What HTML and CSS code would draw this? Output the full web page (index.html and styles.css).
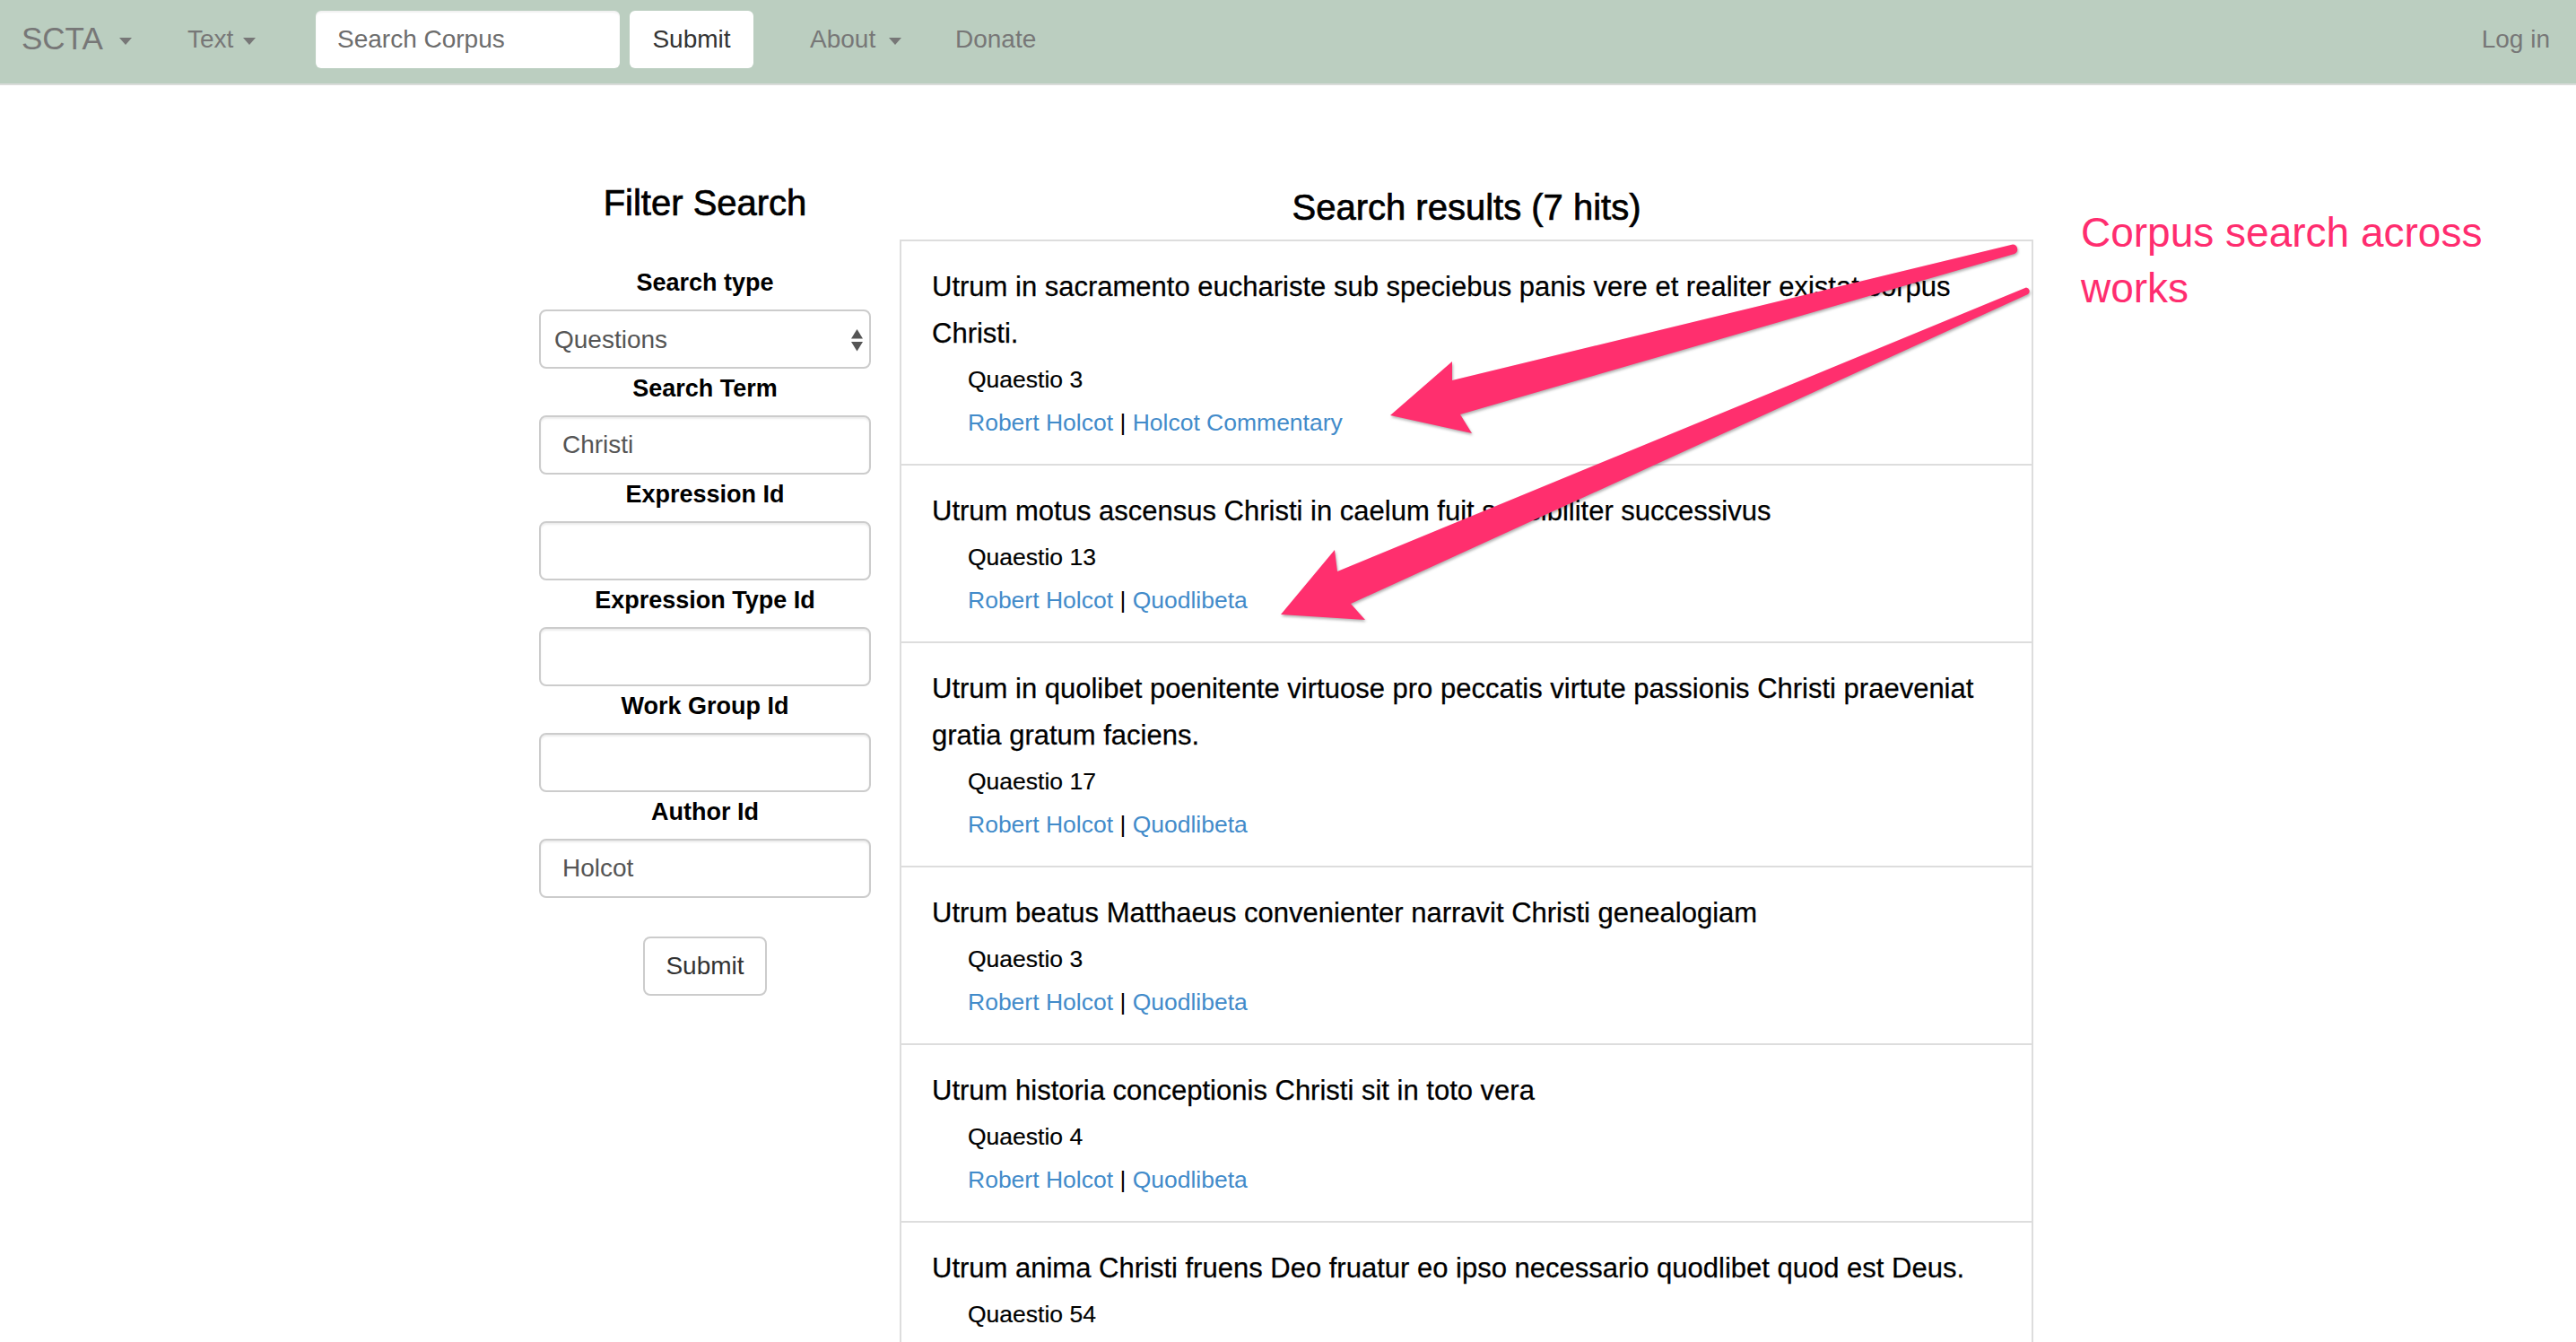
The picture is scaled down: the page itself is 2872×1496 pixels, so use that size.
FILE: index.html
```html
<!DOCTYPE html>
<html lang="en">
<head>
<meta charset="utf-8">
<title>SCTA - Corpus Search</title>
<link rel="stylesheet" href="styles.css">
</head>
<body>
<nav class="navbar">
  <div class="nav-item brand">SCTA<span class="caret caret-brand"></span></div>
  <div class="nav-item text-menu">Text<span class="caret caret-text"></span></div>
  <form class="nav-search">
    <input class="nav-input" type="text" placeholder="Search Corpus">
    <button class="nav-btn" type="button">Submit</button>
  </form>
  <div class="nav-item about">About<span class="caret caret-about"></span></div>
  <div class="nav-item donate">Donate</div>
  <div class="nav-item login">Log in</div>
</nav>

<main class="main">
  <aside class="filter">
    <h3 class="filter-title">Filter Search</h3>
    <form class="filter-form">
      <label class="flabel">Search type</label>
      <div class="select-wrap">
        <select class="fselect"><option>Questions</option></select>
        <svg class="select-arrows" width="13" height="25" viewBox="0 0 13 25"><polygon points="6.5,0 13,10.5 0,10.5"/><polygon points="0,14 13,14 6.5,24.5"/></svg>
      </div>
      <label class="flabel">Search Term</label>
      <input class="finput" type="text" value="Christi">
      <label class="flabel">Expression Id</label>
      <input class="finput" type="text" value="">
      <label class="flabel">Expression Type Id</label>
      <input class="finput" type="text" value="">
      <label class="flabel">Work Group Id</label>
      <input class="finput" type="text" value="">
      <label class="flabel">Author Id</label>
      <input class="finput" type="text" value="Holcot">
      <button class="fbtn" type="button">Submit</button>
    </form>
  </aside>

  <section class="results">
    <h3 class="results-title">Search results (7 hits)</h3>
    <ul class="result-list">
      <li class="result">
        <p class="r-title">Utrum in sacramento euchariste sub speciebus panis vere et realiter existat corpus Christi.</p>
        <div class="r-q">Quaestio 3</div>
        <div class="r-links"><a href="#">Robert Holcot</a> | <a href="#">Holcot Commentary</a></div>
      </li>
      <li class="result">
        <p class="r-title">Utrum motus ascensus Christi in caelum fuit sensibiliter successivus</p>
        <div class="r-q">Quaestio 13</div>
        <div class="r-links"><a href="#">Robert Holcot</a> | <a href="#">Quodlibeta</a></div>
      </li>
      <li class="result">
        <p class="r-title">Utrum in quolibet poenitente virtuose pro peccatis virtute passionis Christi praeveniat gratia gratum faciens.</p>
        <div class="r-q">Quaestio 17</div>
        <div class="r-links"><a href="#">Robert Holcot</a> | <a href="#">Quodlibeta</a></div>
      </li>
      <li class="result">
        <p class="r-title">Utrum beatus Matthaeus convenienter narravit Christi genealogiam</p>
        <div class="r-q">Quaestio 3</div>
        <div class="r-links"><a href="#">Robert Holcot</a> | <a href="#">Quodlibeta</a></div>
      </li>
      <li class="result">
        <p class="r-title">Utrum historia conceptionis Christi sit in toto vera</p>
        <div class="r-q">Quaestio 4</div>
        <div class="r-links"><a href="#">Robert Holcot</a> | <a href="#">Quodlibeta</a></div>
      </li>
      <li class="result">
        <p class="r-title">Utrum anima Christi fruens Deo fruatur eo ipso necessario quodlibet quod est Deus.</p>
        <div class="r-q">Quaestio 54</div>
      </li>
    </ul>
  </section>
</main>

<p class="annotation">Corpus search across works</p>

<svg class="arrows" width="2872" height="1496" viewBox="0 0 2872 1496">
  <path class="arrow" d="M1550,463 L1619,403 L1619,424 L2244,272.5 A5.5,5.5 0 0 1 2246,283 L1628,462 L1641,483 Z"/>
  <path class="arrow" d="M1428,685 L1488,613 L1491,637 L2259,320.5 A4.2,4.2 0 0 1 2261,328 L1506,673 L1522,691 Z"/>
</svg>
</body>
</html>
```

FILE: styles.css
```css
* { box-sizing: border-box; }

html { overflow: hidden; }

body {
  margin: 0;
  position: relative;
  width: 2872px;
  height: 1496px;
  overflow: hidden;
  background: #fff;
  color: #000;
  font-family: "Liberation Sans", Arial, Helvetica, sans-serif;
}

/* ---------- navbar ---------- */
.navbar {
  display: flex;
  align-items: flex-start;
  height: 95px;
  padding: 12px 29px 0 24px;
  background: #bbcec0;
  border-bottom: 2px solid #d9dcd9;
}

.nav-item {
  height: 64px;
  line-height: 64px;
  font-size: 28px;
  color: #777;
  white-space: nowrap;
}

.brand { width: 185px; font-size: 35px; line-height: 62px; }
.text-menu { width: 143px; }
.about { width: 162px; margin-left: 63px; }
.login { margin-left: auto; }

.caret {
  display: inline-block;
  width: 0;
  height: 0;
  vertical-align: middle;
  border-top: 8px solid #777;
  border-left: 7px solid transparent;
  border-right: 7px solid transparent;
}
.caret-brand { margin-left: 18px; }
.caret-text { margin-left: 11px; }
.caret-about { margin-left: 15px; }

.nav-search {
  display: flex;
  gap: 11px;
  margin: 0;
}

.nav-input {
  width: 339px;
  height: 64px;
  padding: 0 24px;
  border: none;
  border-radius: 6px;
  background: #fff;
  font-family: inherit;
  font-size: 28px;
  color: #555;
  box-shadow: inset 0 2px 2px rgba(0,0,0,0.06);
}
.nav-input::placeholder { color: #6d6d6d; }

.nav-btn {
  width: 138px;
  height: 64px;
  padding: 0;
  border: none;
  border-radius: 6px;
  background: #fff;
  font-family: inherit;
  font-size: 28px;
  color: #333;
}

/* ---------- main ---------- */
.main {
  display: flex;
  align-items: flex-start;
  gap: 32px;
  padding-left: 601px;
}

.filter {
  width: 370px;
  padding-top: 109px;
  text-align: center;
}

.filter-title,
.results-title {
  margin: 0;
  font-size: 40px;
  line-height: 44px;
  font-weight: normal;
  -webkit-text-stroke: 0.7px #000;
}
.filter-title { margin-bottom: 46px; }

.flabel {
  display: block;
  margin-bottom: 10px;
  padding-top: 1px;
  font-size: 27px;
  line-height: 40px;
  font-weight: bold;
}

.select-wrap {
  position: relative;
  margin-bottom: 1px;
}

.fselect {
  display: block;
  width: 370px;
  height: 66px;
  padding: 0 15px;
  -webkit-appearance: none;
  appearance: none;
  border: 2px solid #ccc;
  border-radius: 8px;
  background: #fff;
  font-family: inherit;
  font-size: 28px;
  color: #555;
}

.select-arrows {
  position: absolute;
  top: 22px;
  right: 9px;
  fill: #555;
}

.finput {
  display: block;
  width: 370px;
  height: 66px;
  margin: 0 0 1px;
  padding: 0 24px;
  border: 2px solid #ccc;
  border-radius: 8px;
  background: #fff;
  font-family: inherit;
  font-size: 28px;
  color: #555;
  box-shadow: inset 0 2px 2px rgba(0,0,0,0.075);
}

.fbtn {
  display: block;
  width: 138px;
  height: 66px;
  margin: 43px auto 0;
  padding: 0;
  border: 2px solid #ccc;
  border-radius: 8px;
  background: #fff;
  font-family: inherit;
  font-size: 28px;
  color: #333;
}

.results {
  width: 1264px;
  padding-top: 114px;
}
.results-title {
  margin-bottom: 14px;
  text-align: center;
}

.result-list {
  list-style: none;
  margin: 0;
  padding: 0;
  border: 2px solid #ddd;
  border-bottom: none;
}

.result {
  padding: 25px 20px 22px 34px;
  border-bottom: 2px solid #ddd;
}

.r-title {
  margin: 0;
  font-size: 31px;
  line-height: 52px;
  -webkit-text-stroke: 0.25px #000;
}

.r-q {
  margin: 1px 0 0 40px;
  font-size: 26.5px;
  line-height: 48px;
  -webkit-text-stroke: 0.2px #000;
}

.r-links {
  margin-left: 40px;
  font-size: 26.5px;
  line-height: 48px;
}
.r-links a {
  color: #428bca;
  text-decoration: none;
}

/* ---------- annotation overlay ---------- */
.annotation {
  position: absolute;
  top: 228px;
  left: 2320px;
  width: 480px;
  margin: 0;
  font-size: 46px;
  line-height: 62px;
  color: #ff2d6f;
}

.arrows {
  position: absolute;
  top: 0;
  left: 0;
  pointer-events: none;
  filter: drop-shadow(1px 2px 1.5px rgba(0,0,0,0.3));
}
.arrow { fill: #ff2f6e; }
```
